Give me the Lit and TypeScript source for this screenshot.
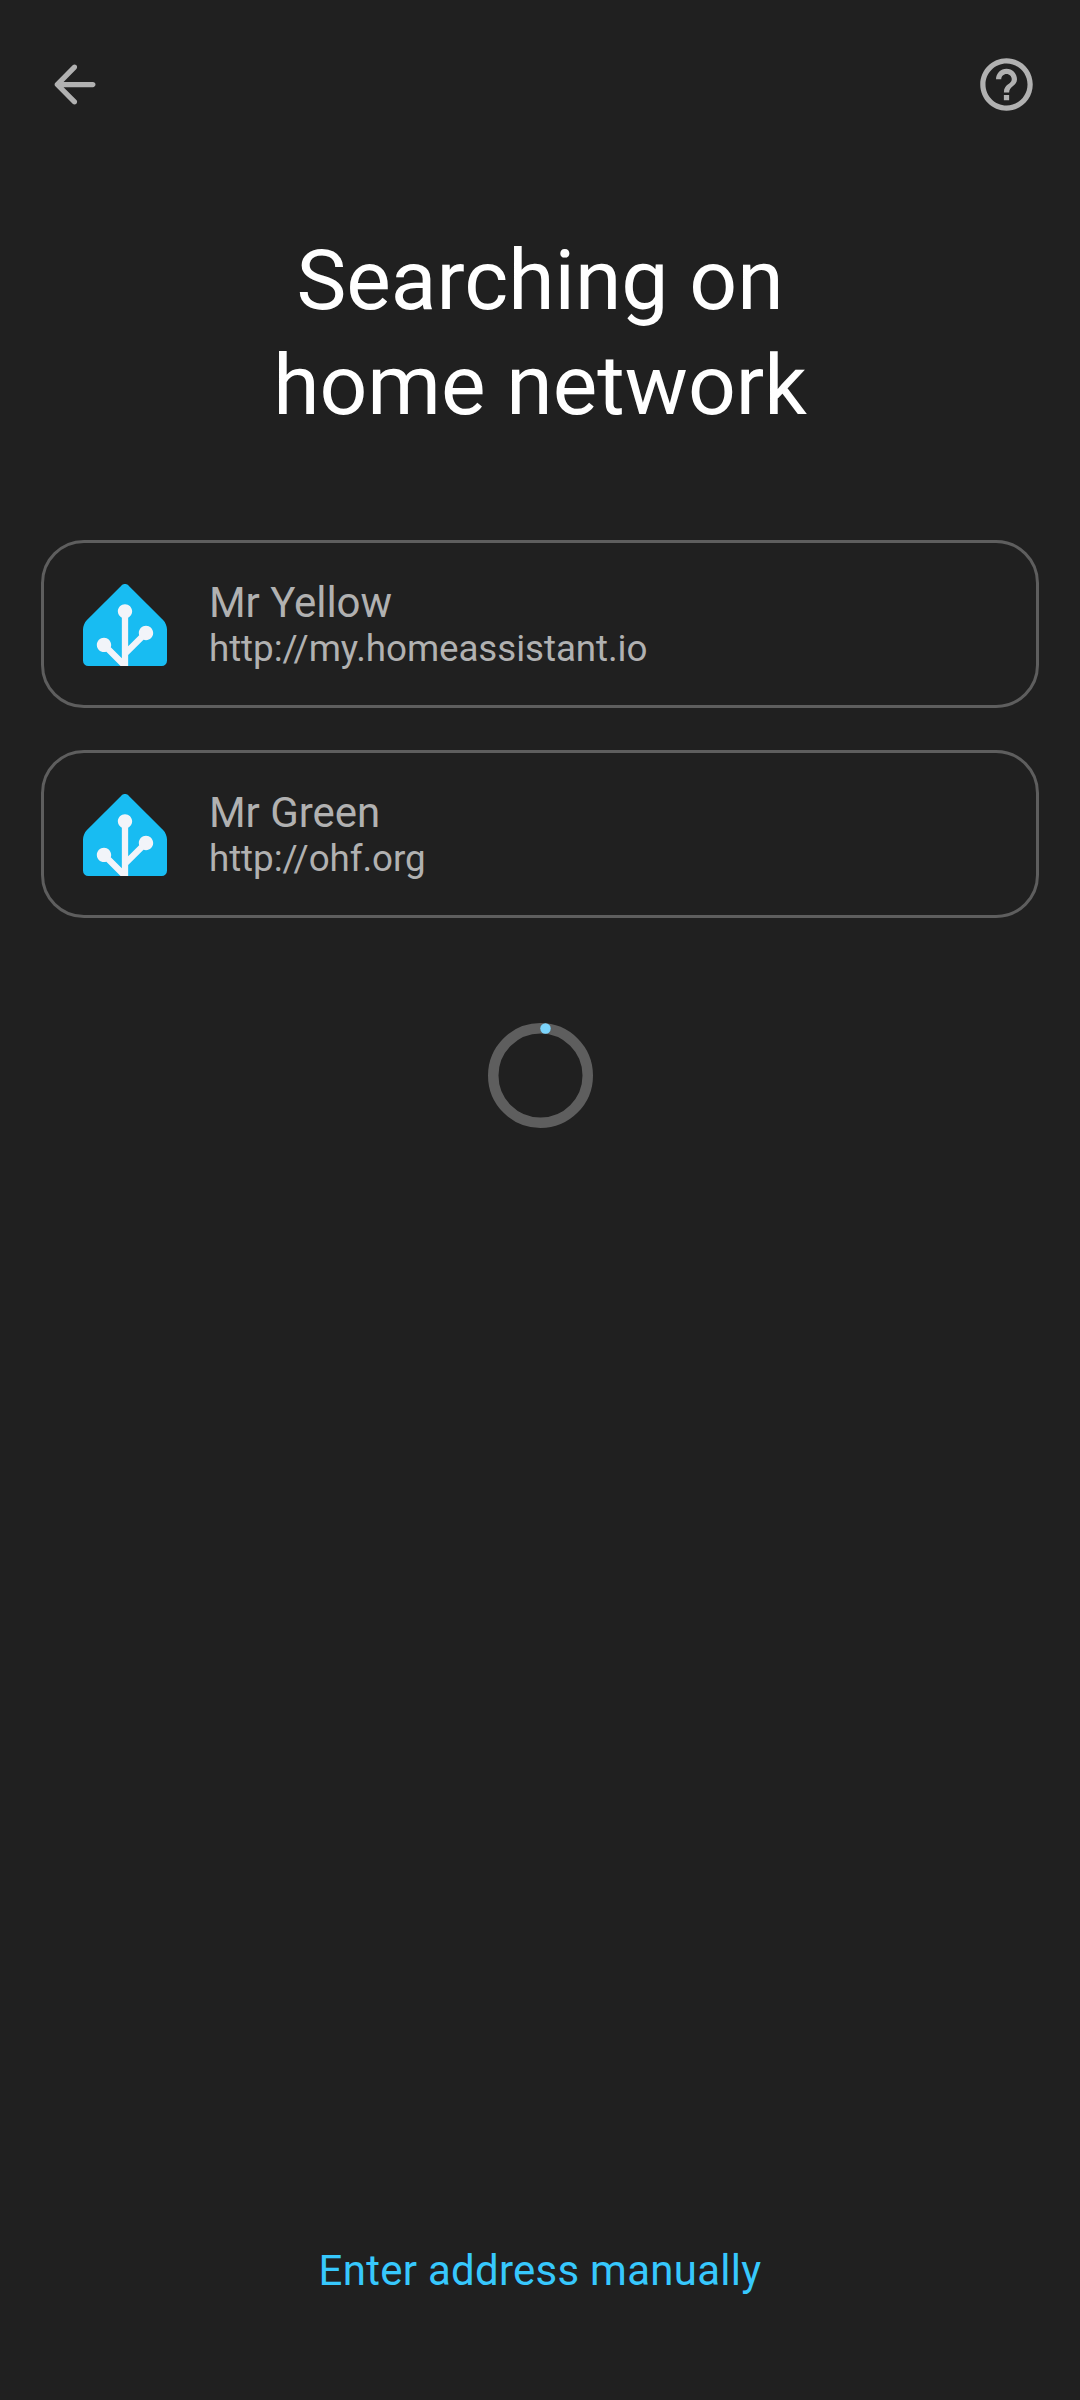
import { LitElement, html, css, svg } from "lit";
import { customElement, property } from "lit/decorators.js";

interface Server {
  name: string;
  url: string;
}

const servers: Server[] = [
  { name: "Mr Yellow", url: "http://my.homeassistant.io" },
  { name: "Mr Green", url: "http://ohf.org" },
];

const backPath = svg`<path d="M19 11H7.83l4.88-4.88c.39-.39.39-1.03 0-1.42-.39-.39-1.02-.39-1.41 0l-6.59 6.59c-.39.39-.39 1.02 0 1.41l6.59 6.59c.39.39 1.02.39 1.41 0 .39-.39.39-1.02 0-1.41L7.83 13H19c.55 0 1-.45 1-1s-.45-1-1-1z"/>`;

const helpPath = svg`<path d="M11 18h2v-2h-2v2zm1-16C6.48 2 2 6.48 2 12s4.48 10 10 10 10-4.48 10-10S17.52 2 12 2zm0 18c-4.41 0-8-3.59-8-8s3.59-8 8-8 8 3.59 8 8-3.59 8-8 8zm0-14c-2.21 0-4 1.79-4 4h2c0-1.1.9-2 2-2s2 .9 2 2c0 2-3 1.75-3 5h2c0-2.25 3-2.5 3-5 0-2.21-1.79-4-4-4z"/>`;

@customElement("server-card")
export class ServerCard extends LitElement {
  @property() name = "";
  @property() url = "";

  static styles = css`
    :host {
      display: flex;
      align-items: center;
      box-sizing: border-box;
      height: 168px;
      padding-left: 39px;
      border: 3px solid #5e5e5e;
      border-radius: 43px;
      color: #b1b1b1;
    }
    .logo {
      width: 84px;
      height: 84px;
      flex: none;
      margin-right: 42px;
    }
    .house {
      fill: #18bcf2;
    }
    .tree {
      fill: #f2f4f9;
    }
    .name {
      font-size: 42px;
      line-height: 49px;
      letter-spacing: -0.05px;
    }
    .url {
      font-size: 36.75px;
      line-height: 43px;
      letter-spacing: -0.07px;
    }
  `;

  render() {
    return html`
      <svg class="logo" viewBox="0 0 240 240">
        <path
          class="house"
          d="M240 224.762a15 15 0 0 1-15 15H15a15 15 0 0 1-15-15v-90c0-8.25 4.77-19.769 10.61-25.609l98.78-98.7805c5.83-5.83 15.38-5.83 21.21 0l98.79 98.7895c5.83 5.83 10.61 17.36 10.61 25.61v90z"
        />
        <path
          class="tree"
          d="m107.27 239.762-40.63-40.63c-2.09.72-4.32 1.13-6.64 1.13-11.3 0-20.5-9.2-20.5-20.5s9.2-20.5 20.5-20.5 20.5 9.2 20.5 20.5c0 2.33-.41 4.56-1.13 6.65l31.63 31.63v-115.88c-6.8-3.3395-11.5-10.3195-11.5-18.3895 0-11.3 9.2-20.5 20.5-20.5s20.5 9.2 20.5 20.5c0 8.07-4.7 15.05-11.5 18.3895v81.27l31.46-31.46c-.62-1.96-.96-4.04-.96-6.2 0-11.3 9.2-20.5 20.5-20.5s20.5 9.2 20.5 20.5-9.2 20.5-20.5 20.5c-2.5 0-4.88-.47-7.09-1.29L129 208.892v30.87z"
        />
      </svg>
      <div>
        <div class="name">${this.name}</div>
        <div class="url">${this.url}</div>
      </div>
    `;
  }
}

@customElement("app-root")
export class AppRoot extends LitElement {
  static styles = css`
    :host {
      display: flex;
      flex-direction: column;
      box-sizing: border-box;
      width: 1080px;
      height: 2400px;
      background: #202020;
      font-family: Roboto, "Liberation Sans", sans-serif;
    }
    .bar {
      display: flex;
      justify-content: space-between;
      align-items: center;
      flex: none;
      height: 63px;
      padding: 53px 42px 0 43px;
    }
    .icon {
      width: 63px;
      height: 63px;
      fill: #b1b1b1;
    }
    .title {
      margin: 112px 0 0;
      font-size: 84px;
      line-height: 105px;
      font-weight: 400;
      color: #ffffff;
      text-align: center;
    }
    .list {
      display: flex;
      flex-direction: column;
      gap: 42px;
      padding: 0 41px;
      margin-top: 102px;
    }
    .spinner {
      width: 105px;
      height: 105px;
      flex: none;
      align-self: center;
      margin-top: 105px;
    }
    .track {
      fill: none;
      stroke: #5e5e5e;
      stroke-width: 10.5;
    }
    .dot {
      fill: #7bd4fb;
    }
    .manual {
      margin: auto 0 103px;
      border: 0;
      padding: 0;
      background: none;
      align-self: center;
      font: 42px/52px Roboto, "Liberation Sans", sans-serif;
      letter-spacing: 0.2625px;
      color: #37c8fd;
    }
  `;

  render() {
    return html`
      <header class="bar">
        <svg class="icon" viewBox="0 0 24 24">${backPath}</svg>
        <svg class="icon" viewBox="0 0 24 24">${helpPath}</svg>
      </header>
      <h1 class="title">Searching on<br />home network</h1>
      <div class="list">
        ${servers.map(
          (s) => html`<server-card .name=${s.name} .url=${s.url}></server-card>`
        )}
      </div>
      <svg class="spinner" viewBox="0 0 105 105">
        <circle class="track" cx="52.5" cy="52.5" r="47.25" />
        <circle class="dot" cx="57.5" cy="5.5" r="5.25" />
      </svg>
      <button class="manual">Enter address manually</button>
    `;
  }
}
